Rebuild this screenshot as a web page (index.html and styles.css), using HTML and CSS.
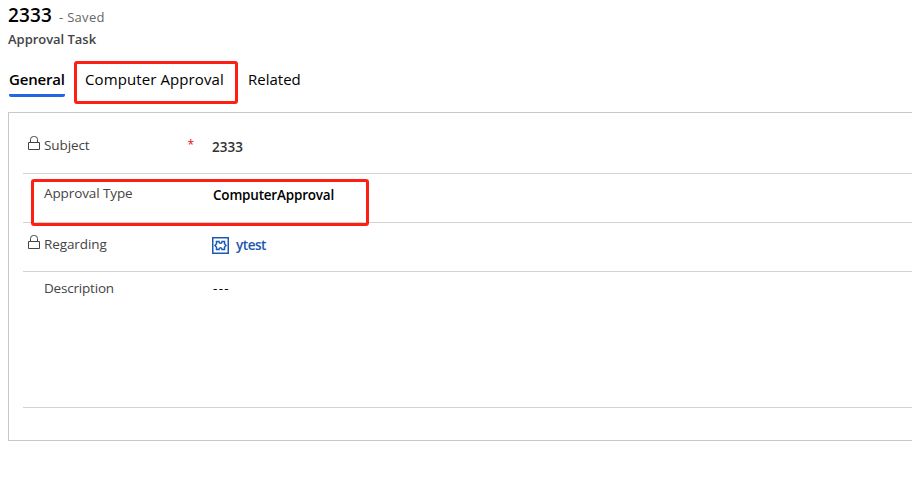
FILE: index.html
```
<!DOCTYPE html>
<html lang="en">
<head>
<meta charset="utf-8">
<title>Approval Task</title>
<link rel="stylesheet" href="styles.css">
</head>
<body>
<header class="header">
  <div class="title-line"><h1 class="title">2333</h1><span class="status">- Saved</span></div>
  <div class="entity"><span>Approval Task</span></div>
</header>
<nav class="tabs">
  <a class="tab active"><span>General</span></a>
  <a class="tab computer"><span>Computer Approval</span></a>
  <a class="tab related"><span>Related</span></a>
</nav>
<main class="panel">
  <div class="row subject">
    <svg class="lock" viewBox="0 0 12 15"><path d="M.5 6.500h11v7H.5zM2.500 6.500V3.500a3 3 0 0 1 3-3h1a3 3 0 0 1 3 3v3"/></svg>
    <div class="label"><span>Subject</span><span class="required">*</span></div>
    <div class="value">2333</div>
  </div>
  <div class="row type">
    <div class="label"><span>Approval Type</span></div>
    <div class="value dark"><span>ComputerApproval</span></div>
    <div class="highlight"></div>
  </div>
  <div class="row regarding">
    <svg class="lock" viewBox="0 0 12 15"><path d="M.5 6.500h11v7H.5zM2.500 6.500V3.500a3 3 0 0 1 3-3h1a3 3 0 0 1 3 3v3"/></svg>
    <div class="label"><span>Regarding</span></div>
    <div class="value link">
      <svg class="entity-icon" viewBox="0 0 17 17"><path d="M.75.75h15.500v15.500H.75z"/><path d="M4.500 4.500h2.500q0 1.800 1.500 1.800T10 4.500h2.500v2.300l1.500 1.700-1.500 1.700v2.300H10q0-1.800-1.500-1.800T7 12.500H4.500v-2.300L3 8.500l1.500-1.700z"/></svg>
      <span>ytest</span>
    </div>
  </div>
  <div class="row description">
    <div class="label"><span>Description</span></div>
    <div class="value dark dashes">---</div>
  </div>
</main>
</body>
</html>
```
FILE: styles.css
```
* { box-sizing: border-box; }
html, body { margin: 0; overflow: hidden; background: #fff; }
body {
  width: 912px;
  height: 496px;
  font-family: "Open Sans", "Noto Sans", sans-serif;
  font-size: 13.5px;
  color: #444;
}
.header { height: 61px; padding: 3px 0 0 8px; }
.title-line { display: flex; align-items: baseline; height: 26px; line-height: 24px; }
.title { margin: 0; font-size: 19px; font-weight: 600; color: #000; letter-spacing: 0.1px; width: 51px; }
.status { font-size: 13px; color: #666; letter-spacing: 0.3px; }
.entity { font-size: 13px; font-weight: 600; line-height: 20px; letter-spacing: -0.03px; }

.tabs { display: flex; height: 43px; padding-left: 9px; color: #000; font-size: 15px; line-height: 20px; }
.tab { height: 36px; padding-top: 8px; white-space: nowrap; }
.active { width: 56px; font-weight: 600; border-bottom: 3px solid #2266e3; border-radius: 0 0 2px 2px; letter-spacing: -0.2px; }
.computer {
  width: 164px;
  height: 43px;
  margin-left: 9px;
  padding: 5px 0 0 8px;
  border: 3px solid #ff1e12;
  border-radius: 3px;
  letter-spacing: 0.1px;
}
.related { margin-left: 10px; }

.panel { width: 904px; height: 329px; margin: 8px 0 0 8px; padding: 12px 0 0 14px; border: 1px solid #c8c8c8; border-right: 0; }
.row { position: relative; display: flex; height: 49px; padding-left: 21px; border-bottom: 1px solid #d2d2d2; line-height: 20px; }
.label { display: flex; justify-content: space-between; width: 168px; padding-top: 10px; white-space: nowrap; letter-spacing: -0.1px; }
.required { margin-right: 18px; font-size: 12px; color: #e00b1c; }
.value { padding-top: 12px; font-weight: 600; color: #333; }
.dark { color: #000; }
.type .label { padding-top: 9px; }
.type .value { padding: 11px 0 0 1px; letter-spacing: -0.2px; }
.lock { position: absolute; left: 5px; top: 11px; width: 12px; height: 15px; fill: none; stroke: #444; }
.regarding .lock { top: 12px; }
.highlight { position: absolute; left: 8px; top: 5px; width: 338px; height: 47px; border: 3px solid #ff1e12; border-radius: 3px; z-index: 1; }
.link { display: flex; align-items: center; gap: 7px; height: 33px; color: #1a58b0; letter-spacing: -0.45px; }
.link span { margin-top: -1px; }
.entity-icon { width: 17px; height: 17px; fill: none; stroke: #1b5bb5; stroke-width: 1.500; }
.description { height: 136px; }
.description .label, .description .value { padding-top: 6px; }
.description .label { letter-spacing: -0.2px; }
.regarding .label { padding-top: 11px; }
.dashes { padding-left: 1px; font-weight: 400; letter-spacing: 1.300px; }
```
